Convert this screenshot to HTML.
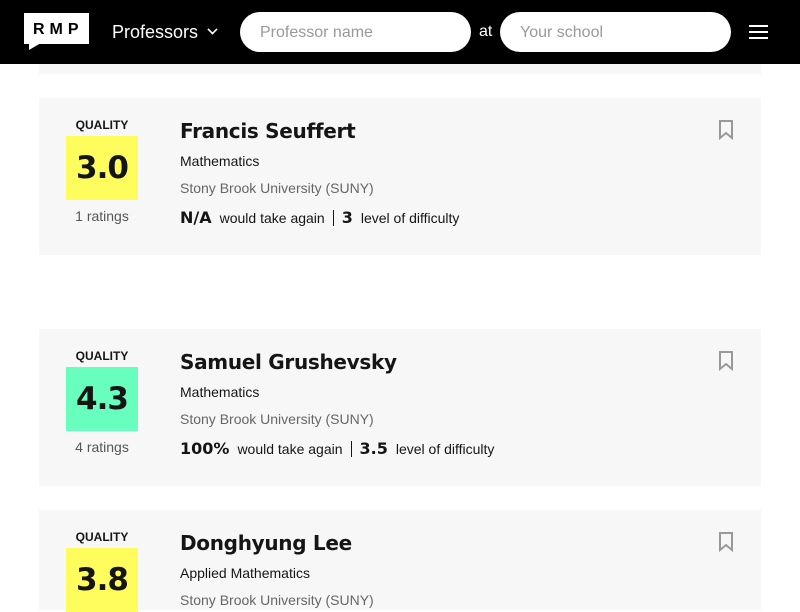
<!DOCTYPE html>
<html><head><style>
*{margin:0;padding:0;box-sizing:border-box}
body{width:800px;height:600px;overflow:hidden;background:#fff;font-family:"Liberation Sans",sans-serif;position:relative}
.hdr{position:absolute;left:0;top:0;width:800px;height:64px;background:#000}
.logo{position:absolute;left:24px;top:13px;width:65px;height:31px;background:#fff;color:#000;font-weight:bold;font-size:16px;letter-spacing:5px;padding:8px 0 0 9px}
.logo:after{content:"";position:absolute;left:5px;top:30px;border-left:0 solid transparent;border-top:7px solid #fff;border-right:12px solid transparent}
.prof{position:absolute;left:112px;top:22px;color:#fff;font-size:18px}
.chev{position:absolute;left:208px;top:25px;width:9px;height:9px;border-right:2px solid #fff;border-bottom:2px solid #fff;transform:rotate(45deg) scale(.8)}
.inp{position:absolute;top:12px;height:40px;background:#fff;border-radius:20px;color:#999;font-size:16px;padding:12px 0 0 20px}
.at{position:absolute;left:479px;top:23px;color:#fff;font-size:16px}
.ham{position:absolute;left:749px;width:19px;height:2px;background:#fff}
.card{position:absolute;left:39px;width:722px;background:#f7f7f7}
.q{position:absolute;left:27px;width:72px;text-align:center;font-size:12px;font-weight:bold;color:#151515}
.box{position:absolute;left:27px;width:72px;height:64px;text-align:center;font-size:31px;font-weight:900;color:#151515;line-height:64px;font-family:"DejaVu Sans",sans-serif;letter-spacing:-1px}
.r{position:absolute;left:27px;width:72px;text-align:center;font-size:14px;color:#555}
.nm{position:absolute;left:141px;font-size:20px;font-weight:bold;color:#151515;font-family:"DejaVu Sans",sans-serif;letter-spacing:-.3px}
.dp{position:absolute;left:141px;font-size:14px;color:#151515}
.sc{position:absolute;left:141px;font-size:14px;color:#666}
.st{position:absolute;left:141px;font-size:14px;color:#151515;white-space:nowrap}
.st b{font-family:"DejaVu Sans",sans-serif;font-size:16px;font-weight:900;margin-right:8px}
.sep{display:inline-block;width:1px;height:16px;background:#151515;vertical-align:-3px;margin:0 8px}
.bm{position:absolute;left:679px;width:16px;height:20px}
</style></head><body>
<div class="hdr">
<div class="logo">RMP</div>
<div class="prof">Professors</div><div class="chev"></div>
<div class="inp" style="left:240px;width:231px">Professor name</div>
<div class="at">at</div>
<div class="inp" style="left:500px;width:231px">Your school</div>
<div class="ham" style="top:25px"></div><div class="ham" style="top:31px"></div><div class="ham" style="top:37px"></div>
</div>
<div class="card" style="top:64px;height:10px"></div>

<div class="card" style="top:98px;height:157px">
<div class="q" style="top:20px">QUALITY</div>
<div class="box" style="top:38px;background:#fffc5e">3.0</div>
<div class="r" style="top:110px">1 ratings</div>
<div class="nm" style="top:21px">Francis Seuffert</div>
<div class="dp" style="top:55px">Mathematics</div>
<div class="sc" style="top:82px">Stony Brook University (SUNY)</div>
<div class="st" style="top:110px"><b>N/A</b>would take again<span class="sep"></span><b>3</b>level of difficulty</div>
<svg class="bm" style="top:22px" viewBox="0 0 16 20"><path d="M2 1h12v17l-6-5-6 5z" fill="none" stroke="#999" stroke-width="2"/></svg>
</div>

<div class="card" style="top:329px;height:157px">
<div class="q" style="top:20px">QUALITY</div>
<div class="box" style="top:38px;background:#68ffbe">4.3</div>
<div class="r" style="top:110px">4 ratings</div>
<div class="nm" style="top:21px">Samuel Grushevsky</div>
<div class="dp" style="top:55px">Mathematics</div>
<div class="sc" style="top:82px">Stony Brook University (SUNY)</div>
<div class="st" style="top:110px"><b>100%</b>would take again<span class="sep"></span><b>3.5</b>level of difficulty</div>
<svg class="bm" style="top:22px" viewBox="0 0 16 20"><path d="M2 1h12v17l-6-5-6 5z" fill="none" stroke="#999" stroke-width="2"/></svg>
</div>

<div class="card" style="top:510px;height:100px">
<div class="q" style="top:20px">QUALITY</div>
<div class="box" style="top:38px;background:#fffc5e">3.8</div>
<div class="nm" style="top:21px">Donghyung Lee</div>
<div class="dp" style="top:55px">Applied Mathematics</div>
<div class="sc" style="top:82px">Stony Brook University (SUNY)</div>
<svg class="bm" style="top:22px" viewBox="0 0 16 20"><path d="M2 1h12v17l-6-5-6 5z" fill="none" stroke="#999" stroke-width="2"/></svg>
</div>
</body></html>
